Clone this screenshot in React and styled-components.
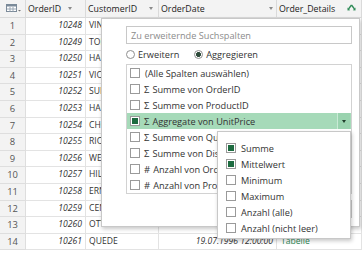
import React from "react";
import styled, { createGlobalStyle } from "styled-components";

const GlobalStyle = createGlobalStyle`
  html, body {
    margin: 0;
    padding: 0;
    background: #fff;
  }
  body {
    font-family: "Open Sans", "Noto Sans", sans-serif;
    color: #333;
  }
  * { box-sizing: border-box; }
`;

const orders = [
  [1, 10248, "VINET", "04.07.1996 12:00:00"],
  [2, 10249, "TOMSP", "05.07.1996 12:00:00"],
  [3, 10250, "HANAR", "08.07.1996 12:00:00"],
  [4, 10251, "VICTE", "08.07.1996 12:00:00"],
  [5, 10252, "SUPRD", "09.07.1996 12:00:00"],
  [6, 10253, "HANAR", "10.07.1996 12:00:00"],
  [7, 10254, "CHOPS", "11.07.1996 12:00:00"],
  [8, 10255, "RICSU", "12.07.1996 12:00:00"],
  [9, 10256, "WELLI", "15.07.1996 12:00:00"],
  [10, 10257, "HILAA", "16.07.1996 12:00:00"],
  [11, 10258, "ERNSH", "17.07.1996 12:00:00"],
  [12, 10259, "CENTC", "18.07.1996 12:00:00"],
  [13, 10260, "OTTIK", "19.07.1996 12:00:00"],
  [14, 10261, "QUEDE", "19.07.1996 12:00:00"],
];

const columns = [
  { name: "OrderID", arrow: 13 },
  { name: "CustomerID", arrow: 5 },
  { name: "OrderDate", arrow: 3 },
];

const listItems = [
  { sym: "", text: "(Alle Spalten auswählen)" },
  { sym: "Σ", text: "Summe von OrderID" },
  { sym: "Σ", text: "Summe von ProductID" },
  { sym: "Σ", text: "Aggregate von UnitPrice", active: true, checked: true },
  { sym: "Σ", text: "Summe von Quantity" },
  { sym: "Σ", text: "Summe von Discount" },
  { sym: "#", text: "Anzahl von OrderID" },
  { sym: "#", text: "Anzahl von ProductID" },
];

const aggregates = [
  { text: "Summe", checked: true },
  { text: "Mittelwert", checked: true },
  { text: "Minimum" },
  { text: "Maximum" },
  { text: "Anzahl (alle)" },
  { text: "Anzahl (nicht leer)" },
];

function TableIcon() {
  return (
    <svg width="15" height="9" viewBox="0 0 15 9">
      <rect x="0.5" y="0.5" width="10" height="7" fill="#fff" stroke="#7b8a99" />
      <rect x="0.5" y="0.5" width="10" height="2" fill="#7b8a99" />
      <path d="M4 3v4.5M7 3v4.5M1 5h9.5" stroke="#9aa7b4" strokeWidth="1" />
      <path d="M12 6h3l-1.5 1.5z" fill="#777" />
    </svg>
  );
}

function ExpandIcon() {
  return (
    <svg width="9" height="7" viewBox="0 0 9 7">
      <path d="M4.5 1L1.5 5M4.5 1L7.5 5" stroke="#2e8b57" strokeWidth="1.3" fill="none" />
      <path d="M0.5 3.5L0.5 6.5L3.2 6.2z M8.5 3.5L8.5 6.5L5.8 6.2z" fill="#2e8b57" />
    </svg>
  );
}

export default function App() {
  return (
    <>
      <GlobalStyle />
      <Screen>
        <Grid>
          <HeaderRow>
            <IndexHead>
              <TableIcon />
            </IndexHead>
            {columns.map((c) => (
              <HeadCell key={c.name}>
                <span>{c.name}</span>
                <FilterArrow $right={c.arrow} />
              </HeadCell>
            ))}
            <HeadCell>
              <span>Order_Details</span>
              <ExpandWrap>
                <ExpandIcon />
              </ExpandWrap>
            </HeadCell>
          </HeaderRow>
          {orders.map(([n, id, cust, date]) => (
            <DataRow key={n}>
              <IndexCell>{n}</IndexCell>
              <NumCell>{id}</NumCell>
              <TextCell>{cust}</TextCell>
              <NumCell>{date}</NumCell>
              <LinkCell>Tabelle</LinkCell>
            </DataRow>
          ))}
        </Grid>

        <Popup>
          <Search>Zu erweiternde Suchspalten</Search>
          <RadioRow>
            <RadioOption>
              <Radio />
              Erweitern
            </RadioOption>
            <RadioOption>
              <Radio $on />
              Aggregieren
            </RadioOption>
          </RadioRow>
          <ListBox>
            {listItems.map((item) => (
              <ListItem key={item.text} $active={item.active}>
                <Check $on={item.checked} />
                {item.sym && <Sym>{item.sym}</Sym>}
                <ItemText>{item.text}</ItemText>
                {item.active && <DropButton />}
              </ListItem>
            ))}
          </ListBox>
          <Buttons>
            <Button aria-label="OK" />
          </Buttons>
        </Popup>

        <SubMenu>
          {aggregates.map((a) => (
            <SubItem key={a.text}>
              <Check $on={a.checked} />
              {a.text}
            </SubItem>
          ))}
        </SubMenu>
      </Screen>
    </>
  );
}

const Screen = styled.div`
  position: relative;
  width: 362px;
  height: 253px;
  overflow: hidden;
  background: #fff;
`;

const Grid = styled.div`
  display: flex;
  flex-direction: column;
  width: 362px;
`;

const rowColumns = `26px 60px 73px 118px 85px`;

const HeaderRow = styled.div`
  display: grid;
  grid-template-columns: ${rowColumns};
  height: 18px;
  background: #f3f3f3;
  border-bottom: 1px solid #dadada;
  font-size: 8.8px;
  color: #222;
`;

const IndexHead = styled.div`
  display: flex;
  align-items: center;
  padding-left: 6px;
  border-right: 1px solid #dadada;
`;

const HeadCell = styled.div`
  display: flex;
  align-items: center;
  justify-content: space-between;
  padding-left: 2px;
  border-right: 1px solid #dadada;
  white-space: nowrap;
  overflow: hidden;
`;

const FilterArrow = styled.i`
  width: 0;
  height: 0;
  margin-right: ${(p) => p.$right}px;
  border-left: 2.5px solid transparent;
  border-right: 2.5px solid transparent;
  border-top: 3px solid #8a8a8a;
`;

const ExpandWrap = styled.span`
  display: flex;
  margin-right: 5px;
  margin-bottom: 2px;
`;

const DataRow = styled.div`
  display: grid;
  grid-template-columns: ${rowColumns};
  height: 16.6px;
  font-size: 8.6px;
  line-height: 15px;
`;

const Cell = styled.div`
  border-right: 1px solid #e3e3e3;
  border-bottom: 1px solid #e3e3e3;
  white-space: nowrap;
  overflow: hidden;
`;

const IndexCell = styled(Cell)`
  background: #f3f3f3;
  text-align: center;
  color: #555;
  font-size: 9.4px;
  border-color: #dedede;
`;

const NumCell = styled(Cell)`
  text-align: right;
  padding-right: 3px;
  font-style: italic;
  color: #333;
`;

const TextCell = styled(Cell)`
  padding-left: 3px;
  color: #333;
`;

const LinkCell = styled(Cell)`
  padding-left: 4px;
  color: #2e8b57;
`;

const Popup = styled.div`
  position: absolute;
  left: 101px;
  top: 18px;
  width: 259px;
  height: 209px;
  display: flex;
  flex-direction: column;
  padding: 7px 7px 0 24px;
  background: #fff;
  border: 1px solid #c8c8c8;
  box-shadow: 1px 2px 4px rgba(0, 0, 0, 0.22);
  font-size: 9.2px;
  color: #333;
`;

const Search = styled.div`
  height: 18px;
  display: flex;
  align-items: center;
  padding-left: 4px;
  border: 1px solid #c8c8c8;
  color: #8c8c8c;
`;

const RadioRow = styled.div`
  height: 20px;
  display: flex;
  align-items: center;
  gap: 15px;
`;

const RadioOption = styled.label`
  display: flex;
  align-items: center;
  gap: 3px;
`;

const Radio = styled.span`
  width: 9px;
  height: 9px;
  border-radius: 50%;
  border: 1px solid #8f8f8f;
  background: ${(p) =>
    p.$on ? "radial-gradient(circle, #2d4a3a 0 2.2px, #fff 2.6px)" : "#fff"};
`;

const ListBox = styled.div`
  height: 130px;
  border: 1px solid #d2d2d2;
  overflow: hidden;
`;

const ListItem = styled.div`
  position: relative;
  height: 16px;
  display: flex;
  align-items: center;
  padding-left: 3px;
  white-space: nowrap;
  background: ${(p) => (p.$active ? "#a6dab9" : "transparent")};
`;

const Check = styled.span`
  flex: none;
  width: 10px;
  height: 10px;
  margin-right: 5px;
  border: 1px solid #9a9a9a;
  background: #fff;
  box-shadow: ${(p) => (p.$on ? "inset 0 0 0 1px #fff, inset 0 0 0 5px #1d6b40" : "none")};
`;

const Sym = styled.span`
  margin: 0 3px 0 -1px;
  font-size: 9.5px;
`;

const ItemText = styled.span``;

const DropButton = styled.span`
  position: absolute;
  right: 1px;
  top: 0;
  width: 13px;
  height: 16px;
  background: #9ad3af;
  border-left: 1px solid #c9ead5;
  &::after {
    content: "";
    position: absolute;
    left: 3.5px;
    top: 6.5px;
    border-left: 2.5px solid transparent;
    border-right: 2.5px solid transparent;
    border-top: 3px solid #1f3d2b;
  }
`;

const Buttons = styled.div`
  display: flex;
  justify-content: flex-end;
  margin-top: 6px;
`;

const Button = styled.div`
  height: 18px;
  width: 60px;
  border: 1px solid #c8c8c8;
  background: #f4f4f4;
`;

const SubMenu = styled.div`
  position: absolute;
  left: 217px;
  top: 131px;
  width: 134px;
  height: 108px;
  padding: 8px 0 0 8px;
  background: #fff;
  border: 1px solid #c8c8c8;
  box-shadow: 1px 2px 4px rgba(0, 0, 0, 0.22);
  font-size: 9.2px;
  color: #333;
`;

const SubItem = styled.div`
  height: 16px;
  display: flex;
  align-items: center;
`;
